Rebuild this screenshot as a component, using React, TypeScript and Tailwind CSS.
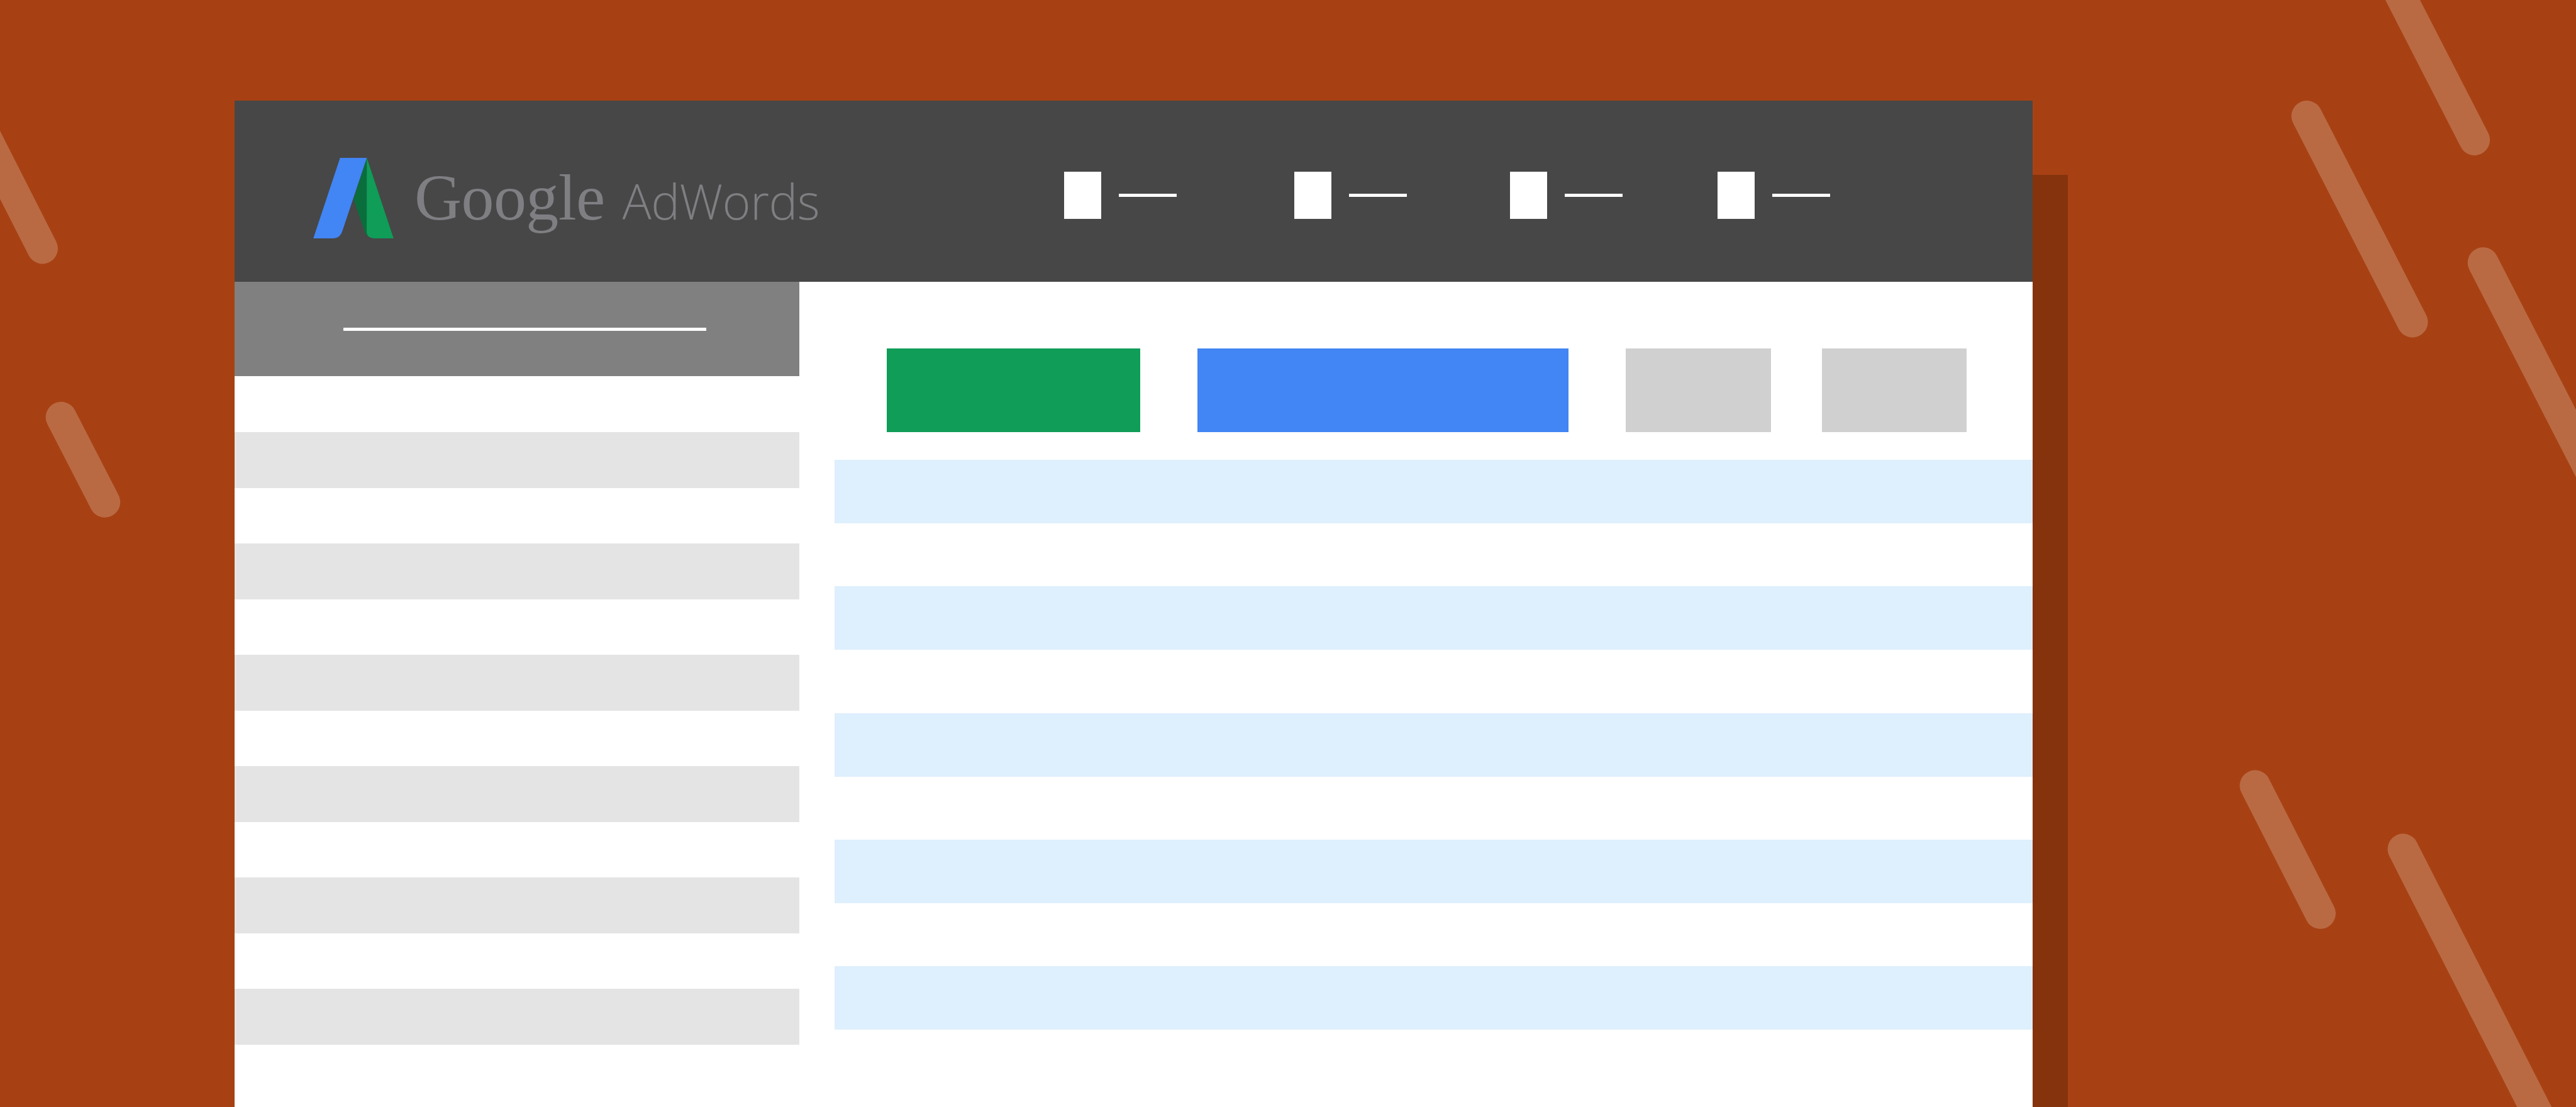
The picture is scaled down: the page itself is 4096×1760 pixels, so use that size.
const stripes = [
  { x1: 3668, y1: 184.5, x2: 3836, y2: 512 },
  { x1: 3934.6, y1: 222.5, x2: 3805, y2: -30 },
  { x1: 3948.3, y1: 417.7, x2: 4155, y2: 820 },
  { x1: 3585.8, y1: 1249, x2: 3689.4, y2: 1452.3 },
  { x1: 3821, y1: 1350, x2: 4070, y2: 1839 },
  { x1: 67.5, y1: 395, x2: -59, y2: 146 },
  { x1: 97.2, y1: 663.3, x2: 166.7, y2: 798.2 },
];

const navItems = [
  { id: 1, className: "ml-[388px]" },
  { id: 2, className: "ml-[187px]" },
  { id: 3, className: "ml-[164px]" },
  { id: 4, className: "ml-[151px]" },
];

const sideRows = [1, 2, 3, 4, 5, 6];
const tableRows = [1, 2, 3, 4, 5];

const AdsLogo = () => (
  <svg viewBox="120 68 645 647" className="h-[128px] w-[128px] shrink-0">
    <path
      d="M550 68 L443 400 L530 650 Q540 685 552 698 Z"
      fill="#0a6e3c"
    />
    <path
      d="M550 68 L765 715 L605 715 Q555 712 549 670 Z"
      fill="#0f9d58"
    />
    <path
      d="M335 68 L550 68 L355 650 Q338 712 280 715 L120 715 Z"
      fill="#4285f4"
    />
  </svg>
);

const App = () => {
  return (
    <div className="relative flex h-[1760px] w-[4096px] items-start overflow-hidden bg-[#a74113] pl-[373px] pt-[160px]">
      {/* Background stripes */}
      <svg
        viewBox="0 0 4096 1760"
        className="absolute left-0 top-0 h-[1760px] w-[4096px]"
      >
        {stripes.map((s) => (
          <line
            key={s.x1}
            x1={s.x1}
            y1={s.y1}
            x2={s.x2}
            y2={s.y2}
            stroke="#ba6a43"
            strokeWidth="49"
            strokeLinecap="round"
          />
        ))}
      </svg>

      {/* Window */}
      <div className="relative flex h-[1600px] w-[2859px] shrink-0 flex-col bg-white">
        {/* Header */}
        <div className="flex h-[288px] shrink-0 items-start bg-[#474747] pl-[125px]">
          <div className="mt-[91px]">
            <AdsLogo />
          </div>
          <div className="ml-[33px] mt-[102px] flex w-[645px] shrink-0 items-baseline text-[#7f7f83]">
            <span className="font-['Liberation_Serif',serif] text-[104px] leading-[104px] tracking-[-0.6px]">
              Google
            </span>
            <span className="ml-[28px] font-['Open_Sans',sans-serif] text-[77px] font-light leading-[104px] tracking-[-0.6px]">
              AdWords
            </span>
          </div>
          {navItems.map((item) => (
            <div
              key={item.id}
              className={`mt-[113px] flex shrink-0 items-center ${item.className}`}
            >
              <div className="h-[75px] w-[59px] bg-white" />
              <div className="ml-[28px] h-[5px] w-[92px] bg-white" />
            </div>
          ))}
        </div>

        <div className="flex min-h-0 flex-1">
          {/* Sidebar */}
          <div className="flex w-[898px] shrink-0 flex-col">
            <div className="h-[150px] bg-[#808080] pl-[173px] pt-[73px]">
              <div className="h-[5px] w-[577px] bg-white" />
            </div>
            <div className="mt-[89px] flex flex-col gap-[88.6px]">
              {sideRows.map((row) => (
                <div key={row} className="h-[88.5px] bg-[#e4e4e4]" />
              ))}
            </div>
          </div>

          {/* Main */}
          <div className="flex min-w-0 flex-1 flex-col pl-[56px]">
            <div className="ml-[83px] mt-[106px] flex h-[133px] shrink-0">
              <div className="w-[403px] bg-[#0f9d58]" />
              <div className="ml-[91px] w-[590px] bg-[#4285f4]" />
              <div className="ml-[91px] w-[231px] bg-[#d0d0d0]" />
              <div className="ml-[81px] w-[230px] bg-[#d0d0d0]" />
            </div>
            <div className="mt-[44px] flex flex-col gap-[100.25px]">
              {tableRows.map((row) => (
                <div key={row} className="h-[101px] bg-[#deeffd]" />
              ))}
            </div>
          </div>
        </div>
      </div>

      {/* Window shadow */}
      <div className="relative mt-[118px] h-[1482px] w-[56px] shrink-0 bg-[#85330d]" />
    </div>
  );
};

export default App;
